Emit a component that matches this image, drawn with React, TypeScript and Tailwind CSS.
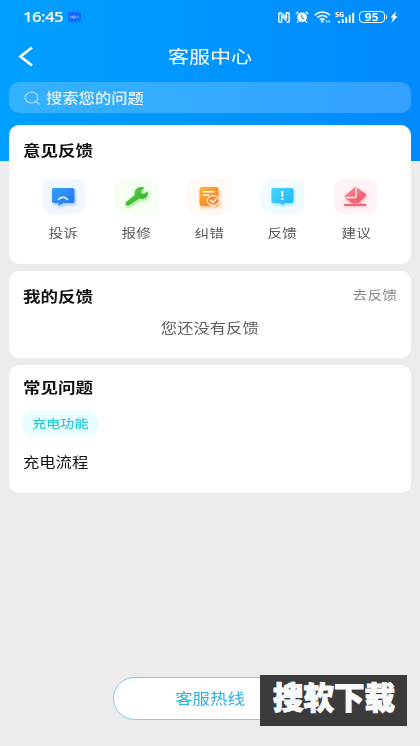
import React from 'react';

function Wide({ children, className = '' }: { children: React.ReactNode; className?: string }) {
  return <span className={`inline-block scale-x-120 whitespace-nowrap leading-none ${className}`}>{children}</span>;
}

function StatusBar() {
  return (
    <div className="flex h-[34px] items-center pl-[23px] pr-[22px] text-white">
      <Wide className="w-[36px] origin-left font-['Open_Sans',sans-serif] text-[14px] font-semibold tracking-[-0.5px]">16:45</Wide>
      <svg className="ml-[9px]" width="13" height="10" viewBox="0 0 13 10">
        <rect width="13" height="10" rx="3" fill="#1769ff" />
        <path d="M2 5h2M4.5 4v2M6 3v4M7.5 4v2M9 5h2" stroke="#8fbdff" strokeWidth="1" />
      </svg>
      <div className="ml-auto flex items-center">
        {/* NFC */}
        <svg width="12" height="11" viewBox="0 0 12 11" fill="none" stroke="white" strokeWidth="1.4">
          <path d="M3.6.8H2Q.8.8.8 2v7q0 1.2 1.2 1.2h1.6V3.2l4.8 5.6" />
          <path d="M8.4 10.2H10q1.2 0 1.2-1.2V2Q11.2.8 10 .8H8.4v5L4.6 1.400" />
        </svg>
        {/* Alarm */}
        <svg className="ml-[5px]" width="14" height="12" viewBox="0 0 14 12">
          <circle cx="7" cy="6.300" r="4.900" fill="white" />
          <path d="M.7 3L3.400.8M13.300 3L10.600.8M3.300 10.300L2 11.600M10.700 10.300l1.300 1.300" stroke="white" strokeWidth="1.300" />
          <path d="M6.800 3.500v3l2.400 1.600" fill="none" stroke="#0794ff" strokeWidth="1.100" />
        </svg>
        {/* Wi-Fi */}
        <svg className="ml-[5px]" width="17" height="12" viewBox="0 0 17 12" fill="none" stroke="white" strokeWidth="1.500">
          <path d="M.7 4.200Q8.300-2.200 16 4.200M3.200 6.500q5.100-4 10.200 0M5.700 8.700q2.600-1.900 5.200 0" />
          <circle cx="8.300" cy="10.300" r="1.200" fill="white" stroke="none" />
          <path d="M12 10.500h1.300M14.500 10.500h1.300" strokeWidth="1.800" />
        </svg>
        {/* Cellular */}
        <svg className="ml-[4px] overflow-visible" width="20" height="14" viewBox="0 -2 20 14">
          <text x="0" y="4.500" textLength="9" lengthAdjust="spacingAndGlyphs" fontFamily="Open Sans, sans-serif" fontWeight="700" fontSize="6.500" fill="white">5G</text>
          <path d="M4 9v2M7.700 7.300V11M11.200 5v6M14.700 3v8M18.200.7V11" stroke="white" strokeWidth="1.900" />
        </svg>
        <div className="ml-[4px] flex h-[12px] w-[26px] items-center justify-center rounded-[4px] border border-white">
          <Wide className="font-['Open_Sans',sans-serif] text-[10px] font-bold">95</Wide>
        </div>
        <span className="ml-px h-[4px] w-[1.5px] bg-white" />
        <svg className="ml-[3px]" width="8" height="12" viewBox="0 0 7 11" fill="white">
          <path d="M5.600 0L.3 6h2.300L1 11l5.800-6.300H4.200z" />
        </svg>
      </div>
    </div>
  );
}

function ComplaintIcon() {
  return (
    <svg width="41" height="33" viewBox="0 0 41 33" className="drop-shadow-[1px_2px_1.5px_#3c8cff77]">
      <defs>
        <linearGradient id="blue" x1="0" y1="0" x2="1" y2="1">
          <stop stopColor="#32a1ff" />
          <stop offset="1" stopColor="#2772ed" />
        </linearGradient>
      </defs>
      <path d="M10 8h19.500q2 0 2 2v11q0 2-2 2h-9.500l-4.500 3v-3H11q-2 0-2-2V9q0-1 1-1z" fill="url(#blue)" />
      <path d="M15.500 19.500q4.500-4.500 9 0" fill="none" stroke="white" strokeWidth="1.500" strokeLinecap="round" />
    </svg>
  );
}

function RepairIcon() {
  return (
    <svg width="41" height="33" viewBox="0 0 41 33" className="drop-shadow-[1px_2px_1.5px_#43c93677]">
      <defs>
        <linearGradient id="green" x1="0" y1="0" x2="1" y2="1">
          <stop stopColor="#5bd346" />
          <stop offset="1" stopColor="#2fa92a" />
        </linearGradient>
      </defs>
      <path d="M28.500 7.600l-3.500 3.400.6 2.400 3 .4 3-2.800c1.200 4.200-1.600 7.700-6 7.700l-2.600-.3-9.500 6.700q-2 1.100-3.500-.1-1.500-1.500.2-3l8.700-7.200c-1.500-5 3.500-9.200 9.600-7.200z" fill="url(#green)" />
    </svg>
  );
}

function CorrectionIcon() {
  return (
    <svg width="41" height="33" viewBox="0 0 41 33" className="drop-shadow-[1px_2px_1.5px_#ff8c2c77]">
      <defs>
        <linearGradient id="orange" x1="0" y1="0" x2="1" y2="1">
          <stop stopColor="#ffb340" />
          <stop offset="1" stopColor="#f47a25" />
        </linearGradient>
      </defs>
      <rect x="10.500" y="7" width="19" height="19" rx="2.500" fill="url(#orange)" />
      <path d="M14 11.700h11.500M14 15.300h6" stroke="white" strokeWidth="1.400" />
      <ellipse cx="24.300" cy="20.500" rx="6" ry="4.900" fill="#f58a34" stroke="#fff3e4" strokeWidth="1.100" />
      <path d="M21 20l2.700 2.300 4-3.500" fill="none" stroke="white" strokeWidth="1.300" />
    </svg>
  );
}

function FeedbackIcon() {
  return (
    <svg width="41" height="33" viewBox="0 0 41 33" className="drop-shadow-[1px_2px_1.5px_#35c9ff77]">
      <defs>
        <linearGradient id="cyan" x1="0" y1="0" x2="1" y2="1">
          <stop stopColor="#4bd5ff" />
          <stop offset="1" stopColor="#22b5f4" />
        </linearGradient>
      </defs>
      <path d="M10 8h20q1.500 0 1.500 1.500V21q0 2-2 2H23l-2.500 2-2.500-2h-6.500q-2 0-2-2V9q0-1 .5-1z" fill="url(#cyan)" />
      <path d="M20.300 11v5.800M20.300 18v2" stroke="white" strokeWidth="1.900" />
    </svg>
  );
}

function SuggestIcon() {
  return (
    <svg width="41" height="33" viewBox="0 0 41 33" className="drop-shadow-[1px_1px_1.5px_#ff637577]">
      <defs>
        <linearGradient id="red" x1="0" y1="0" x2="1" y2="1">
          <stop stopColor="#ff8790" />
          <stop offset="1" stopColor="#ef5367" />
        </linearGradient>
      </defs>
      <path d="M19.500 7.600q1.200-.7 2.400.2l8.600 6q1.300 1.200 0 2.500L23.500 23h-7L9.700 17.800q-.8-1.200.5-2.200z" fill="url(#red)" />
      <path d="M21.300 8v8.300q0 1.200-1.300 1.200h-9.500" fill="none" stroke="#fff1f3" strokeWidth="1.400" />
      <path d="M9 24.900h22" stroke="#f15b6d" strokeWidth="1.900" />
    </svg>
  );
}

const actions = [
  { label: '投诉', icon: ComplaintIcon, tile: 'bg-[#f1f7ff] shadow-[0_0_3px_#dfeaf8]' },
  { label: '报修', icon: RepairIcon, tile: 'bg-[#f5fff2] shadow-[0_0_3px_#e3f2df]' },
  { label: '纠错', icon: CorrectionIcon, tile: 'bg-[#fffaf3] shadow-[0_0_3px_#f6e8da]' },
  { label: '反馈', icon: FeedbackIcon, tile: 'bg-[#f1fbff] shadow-[0_0_3px_#dceff6]' },
  { label: '建议', icon: SuggestIcon, tile: 'bg-[#fff3f5] shadow-[0_0_3px_#f5dfe3]' },
];

export default function App() {
  return (
    <div className="relative flex h-[746px] w-[420px] flex-col overflow-hidden bg-[#ececec] font-['Noto_Sans_CJK_SC',sans-serif] text-[#111]">
      {/* Header */}
      <header className="h-[161px] shrink-0 bg-linear-to-r from-[#00a0ff] to-[#008aff] text-white">
        <StatusBar />
        <div className="relative flex h-[44px] items-center justify-center">
          <svg className="absolute left-[18px] top-[12px]" width="16" height="21" viewBox="0 0 16 21" fill="none">
            <path d="M14 1.500L2.500 10.500 14 19.500" stroke="white" strokeWidth="2.700" />
          </svg>
          <Wide className="text-[17.5px]">客服中心</Wide>
        </div>
        <div className="mx-[9px] mt-[4px] flex h-[31px] items-center rounded-[10px] bg-white/20 pl-[15px]">
          <svg width="17" height="14" viewBox="0 0 17 14" fill="none" stroke="#b9e2ff" strokeWidth="1.200">
            <ellipse cx="7.500" cy="6.500" rx="6.300" ry="5.500" />
            <path d="M12 10.500l3.500 2.700" />
          </svg>
          <Wide className="ml-[5px] origin-left text-[13.6px] font-medium text-[#e6f5ff]">搜索您的问题</Wide>
        </div>
      </header>

      {/* Cards */}
      <main className="relative -mt-[36px] flex flex-col gap-[7px] px-[9px]">
        <section className="h-[139px] rounded-[10px] bg-white px-[14px] pt-[17px]">
          <h2 className="flex h-[16px] items-center">
            <Wide className="origin-left text-[14.6px] font-bold">意见反馈</Wide>
          </h2>
          <div className="-ml-px mt-[22px] flex w-[366px]">
            {actions.map(({ label, icon: Icon, tile }) => (
              <div key={label} className="flex w-[73.2px] shrink-0 flex-col items-center pl-[9px]">
                <div className={`h-[33px] w-[41px] rounded-[9px] ${tile}`}>
                  <Icon />
                </div>
                <Wide className="mt-[14px] text-[12.2px] text-[#595959]">{label}</Wide>
              </div>
            ))}
          </div>
        </section>

        <section className="h-[87px] rounded-[10px] bg-white px-[14px] pt-[17px]">
          <div className="flex h-[16px] items-center justify-between">
            <Wide className="origin-left text-[14.6px] font-bold">我的反馈</Wide>
            <Wide className="-mt-[2px] origin-right text-[12.4px] text-[#8c8c8c]">去反馈</Wide>
          </div>
          <div className="mt-[15px] flex h-[18px] items-center justify-center">
            <Wide className="text-[13.6px] text-[#5c5c5c]">您还没有反馈</Wide>
          </div>
        </section>

        <section className="h-[128px] rounded-[10px] bg-white px-[14px] pt-[14px]">
          <h2 className="flex h-[16px] items-center">
            <Wide className="origin-left text-[14.6px] font-bold">常见问题</Wide>
          </h2>
          <div className="-ml-px mt-[16px] flex h-[25px] w-[77px] items-center justify-center rounded-full bg-[#e9fdff] pb-px">
            <Wide className="text-[11.7px] font-medium text-[#2bc8d6]">充电功能</Wide>
          </div>
          <div className="mt-[17px] flex h-[18px] items-center">
            <Wide className="origin-left text-[13.6px]">充电流程</Wide>
          </div>
        </section>
      </main>

      <button className="mx-auto mt-[184px] flex h-[43px] w-[194px] shrink-0 items-center justify-center rounded-full border border-[#7dcbee] bg-white pb-px">
        <Wide className="text-[14.5px] text-[#28b3e6]">客服热线</Wide>
      </button>

      {/* Corner label */}
      <div className="absolute left-[260px] top-[675px] flex h-[51px] w-[147px] items-center bg-[#3b3b3b] pb-[8px] pl-[13px]">
        <span className="whitespace-nowrap text-[30.5px] font-black leading-none text-[#f8faf9] [-webkit-text-stroke:1px_#f8faf9]">搜软下载</span>
      </div>
    </div>
  );
}
